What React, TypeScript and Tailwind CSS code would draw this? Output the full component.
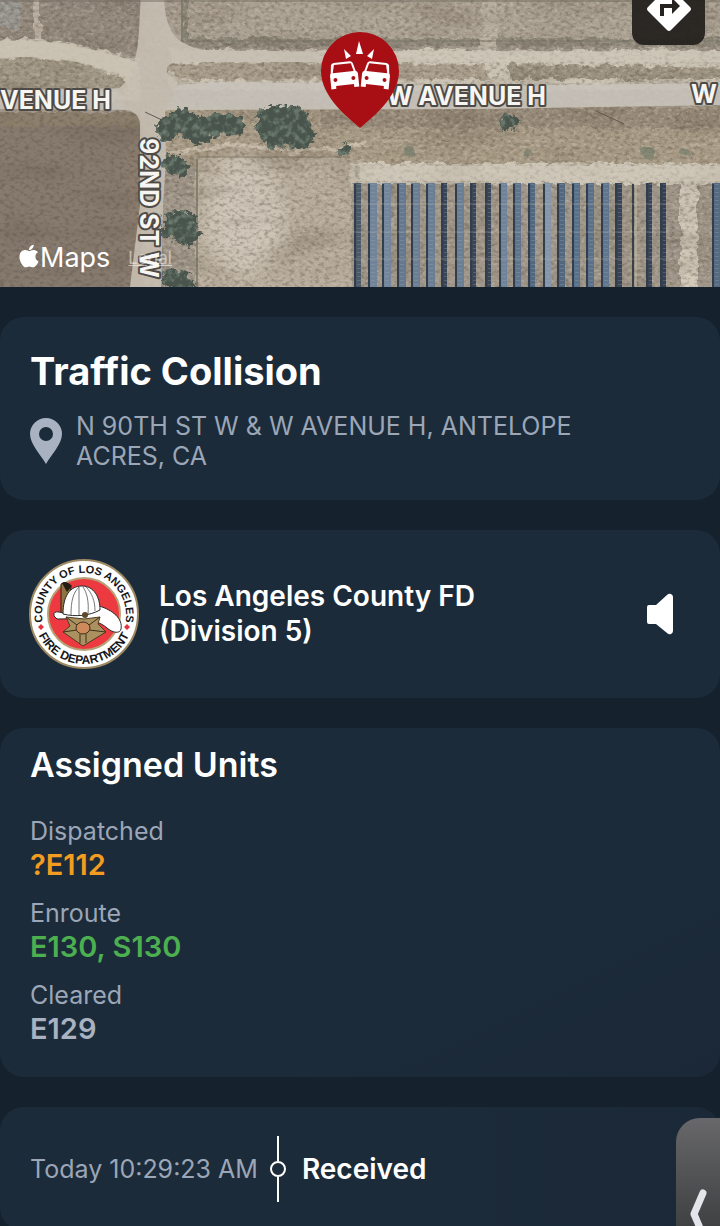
import React from 'react';
import { FaApple } from 'react-icons/fa';

interface UnitGroup {
  status: string;
  units: string;
  color: string;
}

const unitGroups: UnitGroup[] = [
  { status: 'Dispatched', units: '?E112', color: 'text-[#f39c1f]' },
  { status: 'Enroute', units: 'E130, S130', color: 'text-[#4caf50]' },
  { status: 'Cleared', units: 'E129', color: 'text-[#a9b2c0]' },
];

// left edge, width and face colour of every row of solar panels
const panelRows: [number, number, string][] = [
  [354, 7, '#4b5866'], [368, 9, '#71849a'], [382, 9, '#73869b'], [397, 9, '#64788f'], [411, 9, '#6b7e94'],
  [426, 9, '#6b7e94'], [441, 6, '#384557'], [455, 9, '#6a7e94'], [470, 6, '#3a4658'], [485, 6, '#3a4658'],
  [499, 8, '#6f849a'], [513, 8, '#60758d'], [528, 7, '#51677f'], [543, 8, '#8496a8'], [557, 8, '#52687f'],
  [572, 8, '#58708a'], [586, 8, '#5a7189'], [601, 8, '#5f768e'], [615, 7, '#384456'], [646, 6, '#384456'], [660, 6, '#354052'],
  [712, 9, '#566b82'],
];

const trees: [number, number, number, number][] = [
  [168, 128, 12, 12], [182, 122, 15, 13], [198, 130, 17, 14], [216, 125, 15, 11], [233, 125, 12, 11],
  [272, 124, 16, 18], [290, 122, 19, 17], [299, 134, 15, 15], [277, 136, 15, 12],
  [174, 164, 12, 9], [181, 168, 8, 8], [179, 222, 16, 12], [186, 232, 13, 13], [168, 230, 8, 8],
  [176, 279, 15, 9], [185, 283, 9, 8], [345, 149, 6, 5], [509, 122, 9, 9],
];

const AerialMap: React.FC = () => (
  <svg
    className="block w-full h-[287px]"
    viewBox="0 0 720 287"
    preserveAspectRatio="xMidYMid slice"
    aria-label="Satellite map of W Avenue H and 92nd St W"
  >
    <defs>
      <filter id="rough" x="-5%" y="-5%" width="110%" height="110%" colorInterpolationFilters="sRGB">
        <feTurbulence type="fractalNoise" baseFrequency="0.09" numOctaves="3" seed="4" result="n" />
        <feDisplacementMap in="SourceGraphic" in2="n" scale="9" xChannelSelector="R" yChannelSelector="G" />
      </filter>
      <filter id="foliage" x="-5%" y="-5%" width="110%" height="110%" colorInterpolationFilters="sRGB">
        <feTurbulence type="fractalNoise" baseFrequency="0.16" numOctaves="3" seed="9" result="n" />
        <feDisplacementMap in="SourceGraphic" in2="n" scale="14" xChannelSelector="R" yChannelSelector="G" result="shape" />
        <feColorMatrix in="n" type="matrix" values="0 0 0 0 0.42  0 0 0 0 0.48  0 0 0 0 0.43  3.4 0 0 0 -1.5" result="light" />
        <feComposite in="light" in2="shape" operator="in" result="speck" />
        <feMerge>
          <feMergeNode in="shape" />
          <feMergeNode in="speck" />
        </feMerge>
      </filter>
      <filter id="grainDark" x="0" y="0" width="100%" height="100%" colorInterpolationFilters="sRGB">
        <feTurbulence type="fractalNoise" baseFrequency="0.2 0.3" numOctaves="3" seed="12" />
        <feColorMatrix type="matrix" values="0 0 0 0 0.32  0 0 0 0 0.28  0 0 0 0 0.23  0 3 0 0 -1.35" />
      </filter>
      <filter id="grainLight" x="0" y="0" width="100%" height="100%" colorInterpolationFilters="sRGB">
        <feTurbulence type="fractalNoise" baseFrequency="0.22 0.3" numOctaves="3" seed="31" />
        <feColorMatrix type="matrix" values="0 0 0 0 0.85  0 0 0 0 0.82  0 0 0 0 0.76  0 3 0 0 -1.45" />
      </filter>
      <filter id="patches" x="0" y="0" width="100%" height="100%" colorInterpolationFilters="sRGB">
        <feTurbulence type="fractalNoise" baseFrequency="0.012 0.04" numOctaves="3" seed="7" />
        <feColorMatrix type="matrix" values="0 0 0 0 0.35  0 0 0 0 0.3  0 0 0 0 0.24  0 3 0 0 -1.4" />
      </filter>
      <filter id="soft" x="-50%" y="-50%" width="200%" height="200%">
        <feGaussianBlur stdDeviation="9" />
      </filter>
    </defs>

    <rect width="720" height="287" fill="#a1978a" />
    <g filter="url(#rough)">
      {/* fields north of the road */}
      <rect x="-10" y="-10" width="155" height="62" fill="#93897d" />
      <rect x="-10" y="-10" width="30" height="38" fill="#979690" />
      <rect x="34" y="-10" width="7" height="50" fill="#b9ae9f" />
      <rect x="160" y="-10" width="570" height="56" fill="#aca294" />
      <rect x="186" y="38" width="544" height="9" fill="#8e887a" />
      <rect x="183" y="-10" width="5" height="52" fill="#8b897a" />
      <rect x="480" y="-10" width="16" height="60" fill="#b9afa1" />
      <path d="M-10 40 C50 36 90 46 140 60 L140 100 L-10 100Z" fill="#c9c0b1" />
      <path d="M-10 60 C40 54 90 58 130 84 L122 92 L-10 90Z" fill="#a19785" />
      <rect x="170" y="50" width="560" height="40" fill="#cbc3b4" />
      <path d="M166 66 L200 62 L482 65 L490 79 L180 80Z" fill="#a89d8b" />
      <path d="M508 64 L730 68 L730 79 L512 79Z" fill="#9c9281" />
      {/* fields south of the road */}
      <rect x="160" y="106" width="570" height="60" fill="#a89b86" />
      <rect x="320" y="108" width="410" height="20" fill="#978a79" />
      <rect x="-10" y="112" width="152" height="190" fill="#877b70" />
      <rect x="-10" y="112" width="152" height="14" fill="#8c806d" />
      <rect x="196" y="158" width="170" height="140" fill="#b8ad9c" />
      <rect x="350" y="163" width="380" height="24" fill="#cdc5b5" />
      <rect x="352" y="184" width="380" height="112" fill="#a0978a" />
      <rect x="680" y="180" width="18" height="120" fill="#d2c9ba" />
      <path d="M165 154 C230 142 260 143 290 153 C320 148 345 150 365 142" fill="none" stroke="#c8bca9" strokeWidth="4" />
      <path d="M360 140 H720 M360 146 H720" stroke="#b8ac98" strokeWidth="1" />
    </g>
    <ellipse cx="245" cy="215" rx="40" ry="62" fill="#d2c9bc" opacity="0.85" filter="url(#soft)" />
    <rect x="128" y="140" width="12" height="150" fill="#968670" opacity="0.5" filter="url(#soft)" />
    <rect width="720" height="287" filter="url(#patches)" opacity="0.2" />
    <rect width="720" height="287" filter="url(#grainDark)" opacity="0.35" />
    <rect x="142" width="578" height="287" filter="url(#grainLight)" opacity="0.35" />
    <rect width="142" height="100" filter="url(#grainLight)" opacity="0.3" />

    {/* roads */}
    <g opacity="0.88">
      <path d="M-5 90 L140 88 L220 82 L480 86 L725 83 L725 105 L480 109 L150 110 L-5 109Z" fill="#c9c4bc" />
      <path d="M141 -5 H164 C165 28 172 44 204 50 L320 52 V62 H175 C163 66 164 74 178 82 L165 112 L166 160 L163 205 L161 287 H130 L140 205 V125 C140 116 134 111 126 110 L116 92 C124 82 136 78 135 60 C140 40 139 20 141 -5Z" fill="#c8c0b3" />
      <path d="M0 41 C50 38 90 48 138 62 L130 78 C90 62 50 54 0 58Z" fill="#cbc3b4" />
      <path d="M320 51 H720 V62 H320Z M360 166 H720 V181 H360Z" fill="#cfc8ba" opacity="0.65" />
    </g>
    <path d="M197 159 V287 M182 0 V42" stroke="#74705f" strokeWidth="2" opacity="0.7" />
    <path d="M186 41 H720 M198 157 H350" stroke="#77715f" strokeWidth="1" opacity="0.8" />
    <path d="M0 1 H720" stroke="#776f64" strokeWidth="1" />
    <path d="M145 112 L162 120 M596 111 L624 124" stroke="#615a50" strokeWidth="1" />

    {/* solar farm */}
    {panelRows.map(([x, width, face]) => (
      <g key={x}>
        <rect x={x} y="183" width={width} height="104" fill={face} />
        <rect x={x} y="184" width="2" height="103" fill="#333e4c" />
        <path d={`M${x + 5} 184 V287`} stroke="#a6b2bd" strokeWidth="4" strokeDasharray="1 3" opacity="0.25" />
      </g>
    ))}
    <path d="M633 184 V287" stroke="#38404a" strokeWidth="2" />
    <path d="M636 184 V287" stroke="#c4bbaa" strokeWidth="1" />
    <path d="M354 204 H668 M354 232 H668 M354 259 H668" stroke="#c3bcaf" strokeWidth="1" opacity="0.35" />

    <g filter="url(#foliage)">
      {trees.map(([cx, cy, rx, ry]) => (
        <ellipse key={`${cx}-${cy}`} cx={cx} cy={cy} rx={rx} ry={ry} fill="#48544c" />
      ))}
    </g>
    <g fill="#6d7867" opacity="0.6" filter="url(#rough)">
      <circle cx="409" cy="152" r="6" />
      <circle cx="648" cy="153" r="6" />
      <circle cx="685" cy="152" r="5" />
      <circle cx="528" cy="154" r="3" />
    </g>

    {/* street labels */}
    <g
      className="font-[Inter,sans-serif] font-bold text-[25px]"
      fill="#f6f5f2"
      stroke="#4e4a46"
      strokeWidth="4"
      strokeLinejoin="round"
      paintOrder="stroke"
    >
      <text x="111" y="109" textAnchor="end">VENUE H</text>
      <text x="546" y="105" textAnchor="end">W AVENUE H</text>
      <text x="691" y="103">W</text>
      <text transform="translate(140 138) rotate(90)">92ND ST W</text>
    </g>
  </svg>
);

const Car: React.FC = () => (
  <g transform="rotate(-6 344 75)">
    <path
      fill="#fff"
      fillRule="evenodd"
      d="M332 64 Q333 62 335 62 H351 Q353 62 354 64 L356 72 Q358 73 358 75 V88 H353 V85 H335 V88 H330 V75 Q330 73 331 72Z M335 64 L333 72 H354 L352 64Z"
    />
    <circle cx="335" cy="79" r="2" fill="#a80f14" />
    <circle cx="353" cy="79" r="2" fill="#a80f14" />
  </g>
);

const CollisionPin: React.FC = () => (
  <svg className="absolute left-1/2 -translate-x-1/2 top-8 w-20 h-24" viewBox="320 32 80 96" aria-label="Traffic collision">
    <path d="M360 128 C350 119 321 98 321 71 A39 39 0 0 1 399 71 C399 98 370 119 360 128Z" fill="#a80f14" />
    <Car />
    <g transform="translate(720 0) scale(-1 1)">
      <Car />
    </g>
    <path d="M356 54 L359 41 L363 54Z M344 49 L351 56 L346 59Z M374 49 L367 56 L372 59Z" fill="#fff" />
  </svg>
);

const FireSeal: React.FC = () => (
  <svg className="w-[110px] h-[110px] shrink-0" viewBox="0 0 110 110" aria-label="County of Los Angeles Fire Department">
    <defs>
      <path id="sealTop" d="M14 65 A42 42 0 1 1 96 65" />
      <path id="sealBottom" d="M5 55 A50 50 0 0 0 105 55" />
    </defs>
    <circle cx="55" cy="55" r="54" fill="#fff" stroke="#9d8a62" strokeWidth="2" />
    <circle cx="55" cy="55" r="36" fill="#ec3a40" stroke="#b6a277" strokeWidth="2" />
    <g className="font-['Liberation_Sans',sans-serif] font-bold" fill="#17171b">
      <text textAnchor="middle" className="text-[11px]">
        <textPath href="#sealTop" startOffset="50%">COUNTY OF LOS ANGELES</textPath>
      </text>
      <text textAnchor="middle" className="text-[12px]">
        <textPath href="#sealBottom" startOffset="50%">FIRE DEPARTMENT</textPath>
      </text>
    </g>
    <path d="M12 65 l3 3 -3 3 -3 -3Z M98 65 l3 3 -3 3 -3 -3Z" fill="#e2333c" />
    {/* helmet */}
    <path d="M32 25 Q36 22 42 28 L36 60 L32 56Z" fill="#8e7440" stroke="#2c2418" strokeWidth="1" />
    <path d="M33 24 Q37 21 43 27 L38 33Z" fill="#231d16" />
    <path d="M25 57 Q24 52 30 53 C42 57 56 50 70 47 C84 51 94 60 92 70 C91 75 84 74 78 69 C66 58 44 60 28 60Z" fill="#fff" stroke="#2b2b2b" strokeWidth="1" />
    <path d="M34 55 C34 37 41 27 53 27 C65 27 71 38 71 51 C60 57 46 58 34 55Z" fill="#fff" stroke="#2b2b2b" strokeWidth="1" />
    <path d="M42 56 C42 42 44 34 50 28 M50 56 V28 M59 55 C60 42 58 34 54 28 M66 52 C66 42 63 34 57 28" fill="none" stroke="#777" strokeWidth="1" />
    {/* shield */}
    <path d="M37 58 L55 60 L71 58 L69 65 L77 73 L54 87 L34 73 L41 67Z" fill="#ab9160" stroke="#4d3d22" strokeWidth="1" />
    <path d="M37 58 L48 66 M71 58 L60 66 M34 73 L48 71 M77 73 L60 71 M51 75 V84 M57 75 V84" stroke="#3d301b" strokeWidth="1" />
    <ellipse cx="54" cy="69" rx="7" ry="6" fill="#cf8a5c" stroke="#3d301b" strokeWidth="1" />
    <circle cx="56" cy="56" r="3" fill="#5b4928" />
  </svg>
);

export default function App() {
  return (
    <div className="relative h-screen overflow-hidden bg-[#15212c] font-[Inter,sans-serif] text-white">
      <header className="relative overflow-hidden">
        <AerialMap />
        <CollisionPin />
        <button
          aria-label="Directions"
          className="absolute right-[15px] -top-7 w-[73px] h-[73px] rounded-xl bg-[#25221f]/95 flex items-center justify-center"
        >
          <svg className="w-11 h-11" viewBox="0 0 44 44">
            <path d="M20 1 Q22 -1 24 1 L43 20 Q45 22 43 24 L24 43 Q22 45 20 43 L1 24 Q-1 22 1 20Z" fill="#fff" />
            <path d="M15 29 V19 H27" fill="none" stroke="#25221f" strokeWidth="4" />
            <path d="M25 11 L33 19 L25 27Z" fill="#25221f" />
          </svg>
        </button>
        <div className="absolute left-[18px] bottom-3 flex items-center">
          <FaApple className="w-[22px] h-[26px] mb-1" />
          <span className="text-[27px] leading-[34px]">Maps</span>
          <a href="#legal" className="ml-[18px] text-[17px] leading-[20px] text-white/50 underline">Legal</a>
        </div>
      </header>

      <main className="mt-[30px] flex flex-col gap-[30px]">
        <section className="rounded-3xl bg-[#1c2b3a] px-[30px] pt-[30px] pb-[29px]">
          <h1 className="text-[38px] leading-[48px] font-bold">Traffic Collision</h1>
          <div className="mt-4 flex items-center gap-[14px] text-[#9ba6b6]">
            <svg className="w-8 h-[46px] shrink-0" viewBox="0 0 32 46">
              <path fillRule="evenodd" fill="#a9b2c0" d="M16 46 C11 37 0 26 0 16 A16 16 0 0 1 32 16 C32 26 21 37 16 46Z M16 9 a7 7 0 1 0 0 14 a7 7 0 1 0 0 -14Z" />
            </svg>
            <p className="max-w-[540px] text-[25px] leading-[30px]">N 90TH ST W &amp; W AVENUE H, ANTELOPE ACRES, CA</p>
          </div>
        </section>

        <section className="rounded-3xl bg-[#1c2b3a] px-[29px] py-[29px] flex items-center gap-5">
          <FireSeal />
          <h2 className="flex-1 text-[28px] leading-[35px] font-semibold">
            Los Angeles County FD<br />(Division 5)
          </h2>
          <button aria-label="Play audio" className="mr-[17px]">
            <svg className="w-[28px] h-[42px]" viewBox="0 0 28 42">
              <path d="M3 12 H10 L21 2 Q23 0 25 1 Q27 2 27 4 V38 Q27 40 25 41 Q23 42 21 40 L10 31 H3 Q1 31 1 29 V14 Q1 12 3 12Z" fill="#fff" />
            </svg>
          </button>
        </section>

        <section className="rounded-3xl bg-linear-to-br from-[#1c2b3a] from-70% to-[#1a2838] px-[30px] pt-4 pb-[29px]">
          <h2 className="text-[34px] leading-[42px] font-semibold">Assigned Units</h2>
          <dl className="mt-[30px] flex flex-col gap-[14px]">
            {unitGroups.map((group) => (
              <div key={group.status}>
                <dt className="text-[25px] leading-[30px] text-[#9ba6b6]">{group.status}</dt>
                <dd className={`text-[29px] leading-[38px] font-semibold ${group.color}`}>{group.units}</dd>
              </div>
            ))}
          </dl>
        </section>

        <section className="rounded-3xl bg-linear-to-r from-[#1c2b3a] from-60% to-[#1a2838] px-[30px] py-[29px] flex items-center">
          <time className="text-[25px] leading-[30px] text-[#9ba6b6]">Today 10:29:23 AM</time>
          <svg className="ml-3 mr-4 w-4 h-[66px]" viewBox="0 0 16 66">
            <path d="M8 0 V25 M8 41 V66" stroke="#fff" strokeWidth="2" />
            <circle cx="8" cy="33" r="7" fill="none" stroke="#fff" strokeWidth="2" />
          </svg>
          <strong className="text-[28px] leading-[35px] font-semibold">Received</strong>
        </section>
      </main>

      <button
        aria-label="Open side panel"
        className="absolute right-0 bottom-0 w-11 h-[108px] rounded-tl-3xl bg-linear-to-b from-[#68686a] to-[#404143] flex items-end justify-center"
      >
        <svg className="w-5 h-[38px]" viewBox="0 0 20 38">
          <path d="M15 5 L6 26 L15 47" fill="none" stroke="#e4e5ea" strokeWidth="7" strokeLinecap="round" strokeLinejoin="round" />
        </svg>
      </button>
    </div>
  );
}
